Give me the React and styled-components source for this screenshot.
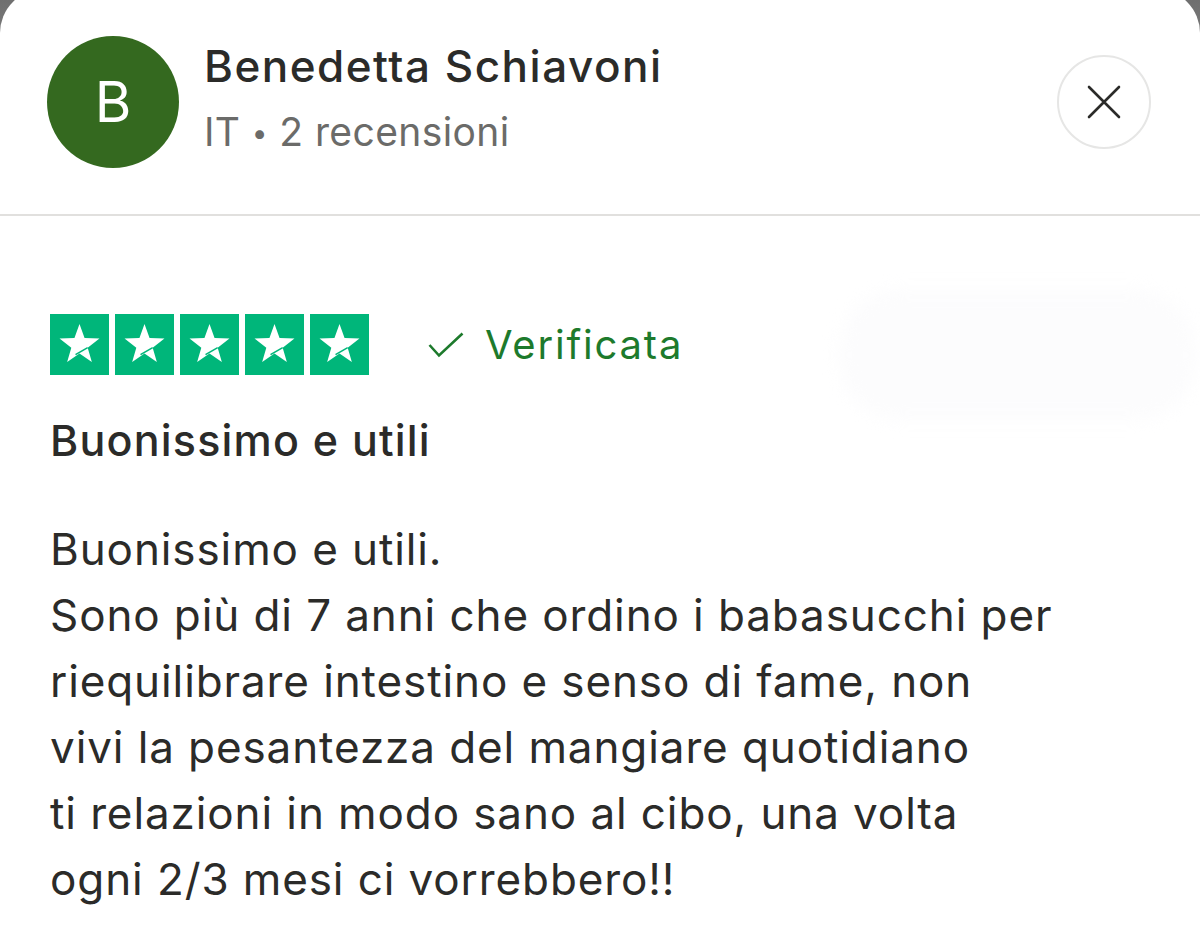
import React from "react";
import styled, { createGlobalStyle } from "styled-components";

const Global = createGlobalStyle`
  html, body { margin: 0; padding: 0; }
  body {
    background: linear-gradient(180deg, #6f6f6f 0%, #808080 60px);
    font-family: Inter, Roboto, "Noto Sans", "Liberation Sans", sans-serif;
    overflow: hidden;
  }
`;

const Card = styled.div`
  background: #ffffff;
  margin-top: -11px;
  border-radius: 44px 44px 0 0;
  min-height: 970px;
  color: #2b2b29;
`;

const Header = styled.header`
  display: flex;
  align-items: center;
  padding: 47px 49px 46px 47px;
  border-bottom: 2px solid #e1e0de;
`;

const Avatar = styled.div`
  width: 132px;
  height: 132px;
  border-radius: 50%;
  background: #34691f;
  color: #ffffff;
  display: flex;
  align-items: center;
  justify-content: center;
  font-size: 56px;
  font-weight: 400;
  flex-shrink: 0;
`;

const Who = styled.div`
  display: flex;
  flex-direction: column;
  margin-left: 25px;
  flex: 1;
`;

const Name = styled.div`
  font-size: 44px;
  font-weight: 500;
  letter-spacing: 1.5px;
  line-height: 60px;
  color: #2b2b29;
  margin-top: -6px;
`;

const Meta = styled.div`
  font-size: 39px;
  line-height: 60px;
  letter-spacing: 0.4px;
  color: #6b6b69;
  margin-top: 6px;
`;

const Dot = styled.span`
  font-size: 28px;
  vertical-align: 3px;
`;

const CloseButton = styled.button`
  width: 94px;
  height: 94px;
  border-radius: 50%;
  border: 2px solid #e6e6e5;
  background: #ffffff;
  display: flex;
  align-items: center;
  justify-content: center;
  padding: 0;
  flex-shrink: 0;
`;

const Body = styled.main`
  padding: 98px 50px 0 50px;
`;

const RatingRow = styled.div`
  display: flex;
  align-items: center;
  position: relative;
`;

const Stars = styled.div`
  display: flex;
  gap: 6px;
`;

const StarBox = styled.div`
  width: 59px;
  height: 61px;
  background: #00b67a;
  display: flex;
  align-items: center;
  justify-content: center;
`;

const Verified = styled.div`
  display: flex;
  align-items: center;
  margin-left: 59px;
  color: #1d7a2c;
  font-size: 40px;
  letter-spacing: 1.8px;
  gap: 21px;
`;

const Smudge = styled.div`
  position: absolute;
  right: -45px;
  top: -24px;
  width: 355px;
  height: 130px;
  border-radius: 60px;
  background: #fcfcfd;
  filter: blur(8px);
`;

const Title = styled.h2`
  margin: 32px 0 0 0;
  font-size: 43px;
  font-weight: 550;
  letter-spacing: 1.2px;
  line-height: 66px;
  color: #2b2b29;
`;

const Text = styled.p`
  margin: 43px 0 0 0;
  font-size: 44px;
  letter-spacing: 0.9px;
  line-height: 66px;
  white-space: pre-line;
  color: #2b2b29;
`;

function Star() {
  const cx = 29.5, cy = 31, R = 21, r = 8.6;
  const pts = [];
  for (let i = 0; i < 10; i++) {
    const a = (Math.PI / 5) * i - Math.PI / 2;
    const rad = i % 2 === 0 ? R : r;
    pts.push([cx + rad * Math.cos(a), cy + rad * Math.sin(a)]);
  }
  const poly = pts.map((p) => p.map((v) => v.toFixed(2)).join(",")).join(" ");
  const a = pts[3], b = pts[5];
  return (
    <svg width="59" height="61" viewBox="0 0 59 61">
      <polygon points={poly} fill="#ffffff" />
      <line x1={a[0]} y1={a[1]} x2={b[0] - 4} y2={b[1] + 1} stroke="#00b67a" strokeWidth="1.6" />
    </svg>
  );
}

const review = `Buonissimo e utili.
Sono più di 7 anni che ordino i babasucchi per
riequilibrare intestino e senso di fame, non
vivi la pesantezza del mangiare quotidiano
ti relazioni in modo sano al cibo, una volta
ogni 2/3 mesi ci vorrebbero!!`;

export default function App() {
  return (
    <>
      <Global />
      <Card>
        <Header>
          <Avatar>B</Avatar>
          <Who>
            <Name>Benedetta Schiavoni</Name>
            <Meta>
              IT <Dot>•</Dot> 2 recensioni
            </Meta>
          </Who>
          <CloseButton aria-label="Chiudi">
            <svg width="34" height="34" viewBox="0 0 34 34">
              <path d="M2 2 L32 32 M32 2 L2 32" stroke="#2b2b29" strokeWidth="2.6" strokeLinecap="round" />
            </svg>
          </CloseButton>
        </Header>
        <Body>
          <RatingRow>
            <Stars>
              {[0, 1, 2, 3, 4].map((i) => (
                <StarBox key={i}>
                  <Star />
                </StarBox>
              ))}
            </Stars>
            <Verified>
              <svg width="36" height="26" viewBox="0 0 36 26">
                <path d="M1.5 13 L11 23.5 L34.5 1.5" fill="none" stroke="#1d7a2c" strokeWidth="2.6" />
              </svg>
              <span>Verificata</span>
            </Verified>
            <Smudge />
          </RatingRow>
          <Title>Buonissimo e utili</Title>
          <Text>{review}</Text>
        </Body>
      </Card>
    </>
  );
}
